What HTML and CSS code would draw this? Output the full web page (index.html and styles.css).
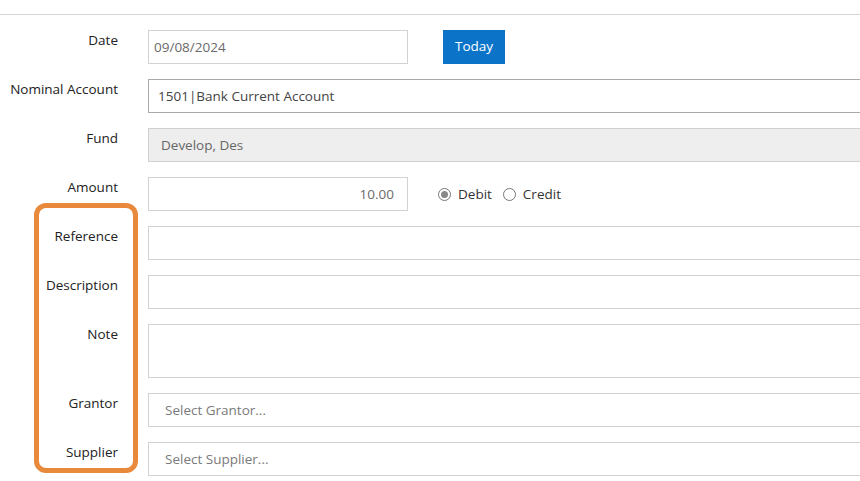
FILE: index.html
```html
<!DOCTYPE html>
<html lang="en">

<head>
    <meta charset="UTF-8">
    <title>Journal Entry</title>
    <link rel="stylesheet" href="styles.css">
</head>

<body>

    <div class="form">
        <div class="row">
            <label class="label">Date</label>
            <div class="field">
                <input class="input input-date" type="text" value="09/08/2024">
                <button class="btn-today">Today</button>
            </div>
        </div>
        <div class="row">
            <label class="label">Nominal Account</label>
            <div class="field">
                <input class="input input-wide input-dark input-nominal" type="text" value="1501|Bank Current Account">
            </div>
        </div>
        <div class="row">
            <label class="label">Fund</label>
            <div class="field">
                <input class="input input-wide input-disabled" type="text" value="Develop, Des" disabled>
            </div>
        </div>
        <div class="row">
            <label class="label">Amount</label>
            <div class="field">
                <input class="input input-amount" type="text" value="10.00">
                <div class="radios">
                    <span class="radio checked"></span><span class="radio-text">Debit</span>
                    <span class="radio"></span><span class="radio-text">Credit</span>
                </div>
            </div>
        </div>
        <div class="row">
            <label class="label">Reference</label>
            <div class="field">
                <input class="input input-wide" type="text">
            </div>
        </div>
        <div class="row">
            <label class="label">Description</label>
            <div class="field">
                <input class="input input-wide" type="text">
            </div>
        </div>
        <div class="row">
            <label class="label">Note</label>
            <div class="field">
                <textarea class="input input-wide textarea"></textarea>
            </div>
        </div>
        <div class="row">
            <label class="label">Grantor</label>
            <div class="field">
                <input class="input input-wide input-select" type="text" placeholder="Select Grantor...">
            </div>
        </div>
        <div class="row">
            <label class="label">Supplier</label>
            <div class="field">
                <input class="input input-wide input-select" type="text" placeholder="Select Supplier...">
            </div>
        </div>

        <!-- annotation highlight -->
        <div class="highlight"></div>
    </div>

</body>

</html>
```

FILE: styles.css
```css
body {
    margin: 0;
    font-family: 'Open Sans', sans-serif;
    font-size: 13.5px;
    color: #222;
    background: #fff;
    overflow: hidden;
}

.form {
    position: relative;
    width: 900px;
    margin-top: 14px;
    border-top: 1px solid #d6d6d6;
    padding-top: 15px;
}

.row {
    display: flex;
    margin-bottom: 15px;
}

.label {
    width: 118px;
    flex-shrink: 0;
    text-align: right;
    line-height: 20px;
    margin-right: 30px;
}

.field {
    display: flex;
    align-items: center;
    flex: 1;
}

.input {
    box-sizing: border-box;
    height: 34px;
    border: 1px solid #d2d2d2;
    font-family: 'Open Sans', sans-serif;
    font-size: 13.5px;
    color: #6a6a6a;
    padding: 0 5px;
    outline: none;
    background: #fff;
}

.input-date {
    width: 260px;
}

.input-wide {
    width: 100%;
}

.input-dark {
    border-color: #a9a9a9;
}

.input-nominal {
    padding-left: 9px;
    color: #444;
}

.input-disabled {
    background: #eeeeee;
    border-color: #d0d0d0;
    padding-left: 12px;
    color: #666;
}

.input-amount {
    width: 260px;
    text-align: right;
    padding-right: 13px;
}

.input-select {
    padding-left: 16px;
}

.input-select::placeholder {
    color: #7a7a7a;
}

.textarea {
    height: 54px;
    resize: none;
}

.btn-today {
    margin-left: 35px;
    height: 34px;
    width: 62px;
    border: none;
    background: #0b74c9;
    color: #fff;
    font-family: 'Open Sans', sans-serif;
    font-size: 13.5px;
    padding: 0 0 2px;
}

.radios {
    display: flex;
    align-items: center;
    margin-left: 30px;
    color: #333;
}

.radio {
    box-sizing: border-box;
    width: 13px;
    height: 13px;
    border: 1px solid #777;
    border-radius: 50%;
    display: inline-flex;
    align-items: center;
    justify-content: center;
    margin-right: 7px;
}

.radio.checked::after {
    content: '';
    width: 7px;
    height: 7px;
    border-radius: 50%;
    background: #888;
}

.radio-text {
    margin-right: 11px;
}

/* orange annotation box */
.highlight {
    position: absolute;
    left: 34px;
    top: 188px;
    width: 94px;
    height: 260px;
    border: 5px solid #e8893b;
    border-radius: 12px;
    pointer-events: none;
}
```
